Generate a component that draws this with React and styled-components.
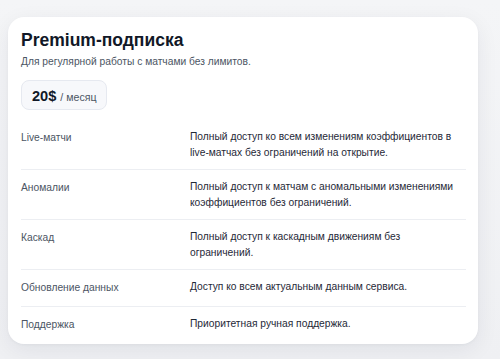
import React from "react";
import styled, { createGlobalStyle } from "styled-components";

const Global = createGlobalStyle`
  html, body { margin: 0; padding: 0; }
  body {
    background: linear-gradient(180deg, #f4f5f7 0%, #eff0f3 100%);
    font-family: "Liberation Sans", Arial, sans-serif;
    min-height: 359px;
  }
`;

const Page = styled.div`
  padding: 17px 0 0 8px;
  height: 359px;
  box-sizing: border-box;
`;

const Card = styled.section`
  width: 470px;
  box-sizing: border-box;
  background: #ffffff;
  border-radius: 16px;
  padding: 12px 12px 1px 13px;
  box-shadow: 0 6px 22px rgba(20, 30, 60, 0.07), 0 1px 3px rgba(20, 30, 60, 0.04);
  display: flex;
  flex-direction: column;
  align-items: flex-start;
`;

const Title = styled.h2`
  margin: 0;
  font-size: 17.5px;
  line-height: 22px;
  font-weight: 700;
  color: #111827;
`;

const Subtitle = styled.p`
  margin: 3px 0 0;
  font-size: 10.25px;
  line-height: 16px;
  color: #4b5563;
`;

const Price = styled.div`
  margin-top: 10px;
  height: 30px;
  box-sizing: border-box;
  display: flex;
  align-items: baseline;
  gap: 4px;
  padding: 5px 9px 0 10px;
  border: 1px solid #e6e9f0;
  background: #f7f8fb;
  border-radius: 8px;
`;

const Amount = styled.span`
  font-size: 14.6px;
  line-height: 20px;
  font-weight: 700;
  color: #111827;
`;

const Period = styled.span`
  font-size: 10.6px;
  color: #4b5563;
`;

const Table = styled.div`
  margin-top: 10px;
  align-self: stretch;
  display: flex;
  flex-direction: column;
`;

const Row = styled.div`
  display: grid;
  grid-template-columns: 169px 272px;
  align-items: start;
  padding: 9px 0;
  border-top: ${(p) => (p.$first ? "none" : "1px solid #eceef2")};
`;

const Label = styled.div`
  font-size: 10.25px;
  line-height: 18px;
  color: #4b5563;
`;

const Desc = styled.div`
  font-size: 10.25px;
  line-height: 15.5px;
  color: #1f2937;
`;

const rows = [
  ["Live-матчи", "Полный доступ ко всем изменениям коэффициентов в live-матчах без ограничений на открытие."],
  ["Аномалии", "Полный доступ к матчам с аномальными изменениями коэффициентов без ограничений."],
  ["Каскад", "Полный доступ к каскадным движениям без ограничений."],
  ["Обновление данных", "Доступ ко всем актуальным данным сервиса."],
  ["Поддержка", "Приоритетная ручная поддержка."],
];

export default function App() {
  return (
    <>
      <Global />
      <Page>
        <Card>
          <Title>Premium-подписка</Title>
          <Subtitle>Для регулярной работы с матчами без лимитов.</Subtitle>
          <Price>
            <Amount>20$</Amount>
            <Period>/ месяц</Period>
          </Price>
          <Table>
            {rows.map(([label, desc], i) => (
              <Row key={label} $first={i === 0}>
                <Label>{label}</Label>
                <Desc>{desc}</Desc>
              </Row>
            ))}
          </Table>
        </Card>
      </Page>
    </>
  );
}
